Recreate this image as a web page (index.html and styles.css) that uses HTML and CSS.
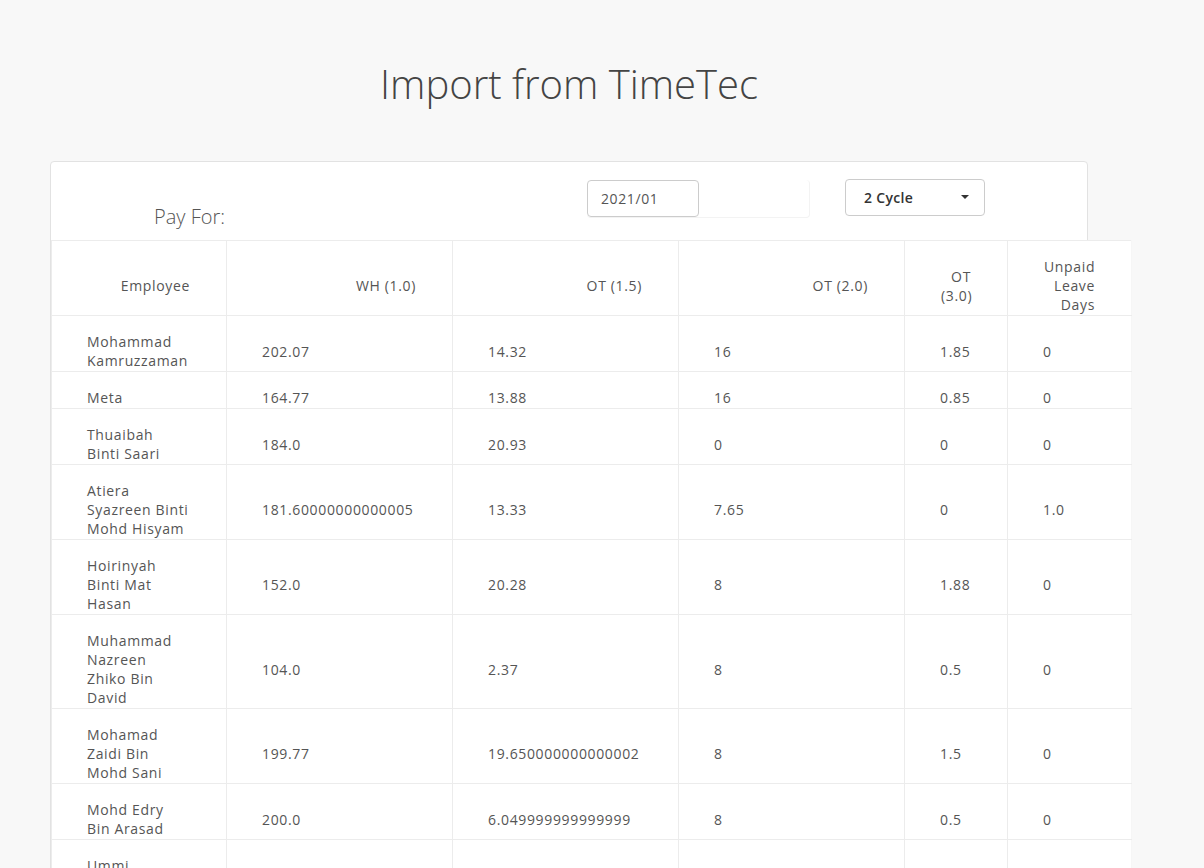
FILE: index.html
```html
<!DOCTYPE html>
<html lang="en">

<head>
  <meta charset="UTF-8">
  <meta name="viewport" content="width=device-width, initial-scale=1.0">
  <title>Import from TimeTec</title>
  <link rel="stylesheet" href="styles.css">
</head>

<body>
  <div class="page">
    <h1 class="title">Import from TimeTec</h1>

    <div class="card">
      <div class="card-head">
        <div class="pay-label">Pay For:</div>
        <div class="date-wrap">
          <input type="text" class="date-input" value="2021/01">
        </div>
        <div class="cycle-select">
          <span>2 Cycle</span>
          <span class="caret"></span>
        </div>
      </div>

      <table class="hours">
        <colgroup>
          <col style="width: 175px">
          <col style="width: 226px">
          <col style="width: 226px">
          <col style="width: 226px">
          <col style="width: 103px">
          <col style="width: 124px">
        </colgroup>
        <thead>
          <tr>
            <th>Employee</th>
            <th>WH (1.0)</th>
            <th>OT (1.5)</th>
            <th>OT (2.0)</th>
            <th>OT (3.0)</th>
            <th>Unpaid Leave Days</th>
          </tr>
        </thead>
        <tbody>
          <tr>
            <td class="name">Mohammad<br>Kamruzzaman</td>
            <td>202.07</td>
            <td>14.32</td>
            <td>16</td>
            <td>1.85</td>
            <td>0</td>
          </tr>
          <tr>
            <td class="name">Meta</td>
            <td>164.77</td>
            <td>13.88</td>
            <td>16</td>
            <td>0.85</td>
            <td>0</td>
          </tr>
          <tr>
            <td class="name">Thuaibah<br>Binti Saari</td>
            <td>184.0</td>
            <td>20.93</td>
            <td>0</td>
            <td>0</td>
            <td>0</td>
          </tr>
          <tr>
            <td class="name">Atiera<br>Syazreen Binti<br>Mohd Hisyam</td>
            <td>181.60000000000005</td>
            <td>13.33</td>
            <td>7.65</td>
            <td>0</td>
            <td>1.0</td>
          </tr>
          <tr>
            <td class="name">Hoirinyah<br>Binti Mat<br>Hasan</td>
            <td>152.0</td>
            <td>20.28</td>
            <td>8</td>
            <td>1.88</td>
            <td>0</td>
          </tr>
          <tr>
            <td class="name">Muhammad<br>Nazreen<br>Zhiko Bin<br>David</td>
            <td>104.0</td>
            <td>2.37</td>
            <td>8</td>
            <td>0.5</td>
            <td>0</td>
          </tr>
          <tr>
            <td class="name">Mohamad<br>Zaidi Bin<br>Mohd Sani</td>
            <td>199.77</td>
            <td>19.650000000000002</td>
            <td>8</td>
            <td>1.5</td>
            <td>0</td>
          </tr>
          <tr>
            <td class="name">Mohd Edry<br>Bin Arasad</td>
            <td>200.0</td>
            <td>6.049999999999999</td>
            <td>8</td>
            <td>0.5</td>
            <td>0</td>
          </tr>
          <tr>
            <td class="name">Ummi<br>Kalsom<br>Binti Ismail</td>
            <td>176.0</td>
            <td>10.5</td>
            <td>8</td>
            <td>0</td>
            <td>0</td>
          </tr>
          <tr>
            <td class="name">Nur Aina<br>Binti Zulkifli</td>
            <td>168.0</td>
            <td>4.25</td>
            <td>0</td>
            <td>0</td>
            <td>0</td>
          </tr>
        </tbody>
      </table>
    </div>
  </div>
</body>

</html>
```

FILE: styles.css
```css
body {
  margin: 0;
  background-color: #f8f8f8;
  font-family: "Open Sans", "Noto Sans", sans-serif;
  color: #555;
}

.page {
  width: 1038px;
  margin-left: 50px;
  padding-bottom: 40px;
}

.title {
  margin: 62px 0 55px;
  font-size: 40px;
  line-height: 44px;
  font-weight: 300;
  color: #444;
  text-align: center;
}

.card {
  background-color: #fff;
  border: 1px solid #e2e2e2;
  border-radius: 4px;
}

.card-head {
  display: flex;
  align-items: flex-start;
  height: 78px;
  padding: 17px 0 0 103px;
  box-sizing: border-box;
}

.pay-label {
  width: 433px;
  margin-top: 24px;
  font-size: 20px;
  font-weight: 300;
  line-height: 27px;
  color: #555;
}

.date-wrap {
  width: 223px;
  height: 38px;
  margin-top: 1px;
  border: 1px solid #f3f3f3;
  border-left: none;
  border-top: none;
  border-radius: 4px;
  box-sizing: border-box;
}

.date-input {
  display: block;
  width: 112px;
  height: 37px;
  margin: 0;
  padding: 0 13px;
  border: 1px solid #ccc;
  border-radius: 4px;
  box-sizing: border-box;
  font-family: inherit;
  font-size: 14px;
  letter-spacing: 0.6px;
  color: #555;
}

.cycle-select {
  display: flex;
  align-items: center;
  justify-content: space-between;
  width: 140px;
  height: 37px;
  margin-left: 35px;
  padding: 0 15px 1px 18px;
  border: 1px solid #ccc;
  border-radius: 4px;
  box-sizing: border-box;
  font-size: 14px;
  font-weight: 600;
  letter-spacing: 0.3px;
  color: #333;
}

.caret {
  width: 0;
  height: 0;
  border-left: 4px solid transparent;
  border-right: 4px solid transparent;
  border-top: 4px solid #333;
}

.hours {
  width: 1080px;
  table-layout: fixed;
  border-collapse: collapse;
  background-color: #fff;
}

.hours th,
.hours td {
  padding: 16px 36px 1px;
  border: 1px solid #ececec;
  vertical-align: middle;
  font-size: 14px;
  line-height: 19px;
  letter-spacing: 0.65px;
  color: #555;
}

.hours th {
  font-weight: normal;
  text-align: right;
}

.hours td {
  padding-left: 35px;
  text-align: left;
}

.hours td.name {
  white-space: nowrap;
}

.hours tr > :last-child {
  border-right-color: #f6f6f6;
}
```
